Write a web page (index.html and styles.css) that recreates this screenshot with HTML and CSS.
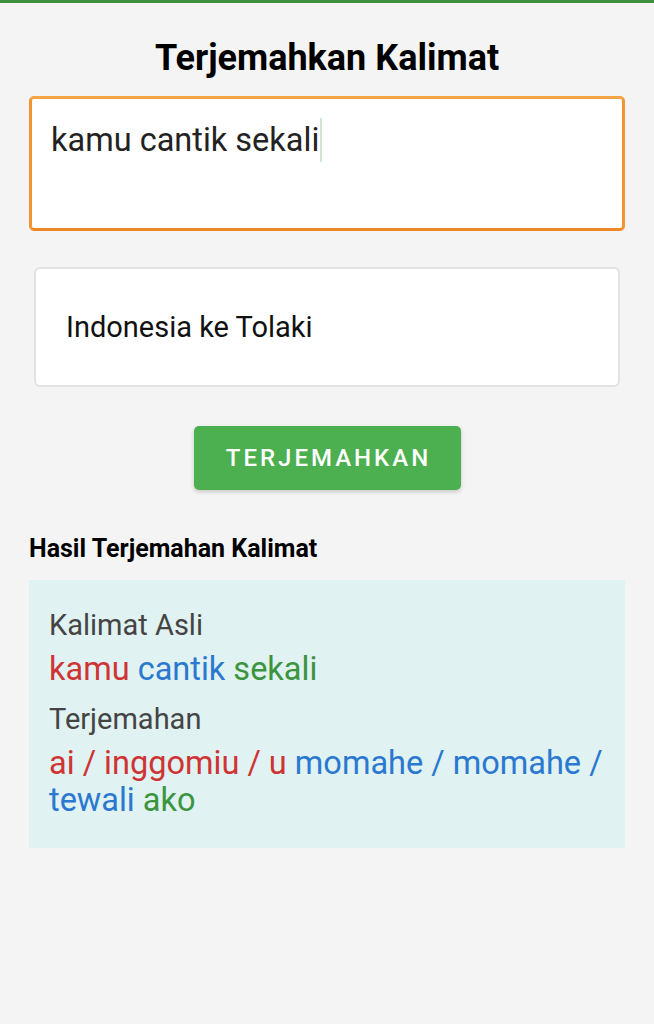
FILE: index.html
```html
<!DOCTYPE html>
<html lang="id">
<head>
<meta charset="utf-8">
<title>Terjemahkan Kalimat</title>
<link rel="stylesheet" href="styles.css">
</head>
<body>
<div class="topbar"></div>
<main class="page">
  <h1 class="title">Terjemahkan Kalimat</h1>
  <div class="input-box">
    <span class="input-text">kamu cantik sekali</span><span class="caret"></span>
  </div>
  <div class="select-box">Indonesia ke Tolaki</div>
  <div class="btn-row"><button class="btn">TERJEMAHKAN</button></div>
  <h2 class="subtitle">Hasil Terjemahan Kalimat</h2>
  <section class="result">
    <div class="label">Kalimat Asli</div>
    <div class="words"><span class="red">kamu</span> <span class="blue">cantik</span> <span class="green">sekali</span></div>
    <div class="label">Terjemahan</div>
    <div class="words"><span class="red">ai / inggomiu / u</span> <span class="blue">momahe / momahe / tewali</span> <span class="green">ako</span></div>
  </section>
</main>
</body>
</html>
```
FILE: styles.css
```css
html, body {
  margin: 0;
  padding: 0;
}
body {
  background: #f4f4f4;
  font-family: Roboto, "Liberation Sans", sans-serif;
  color: #222;
  min-height: 1024px;
}
.topbar {
  height: 3px;
  background: #3f8f3f;
}
.page {
  padding: 0 29px;
}
.title {
  margin: 34px 0 0;
  font-size: 36px;
  font-weight: 700;
  line-height: 42px;
  text-align: center;
  color: #000;
}
.input-box {
  margin-top: 17px;
  box-sizing: border-box;
  height: 135px;
  border: 3px solid #f29530;
  border-top-color: #f5a443;
  border-bottom-color: #ee8726;
  border-radius: 5px;
  background: #fff;
  padding: 19px 19px;
  display: flex;
  align-items: flex-start;
  font-size: 32.5px;
  line-height: 44px;
}
.input-text {
  color: #222;
}
.caret {
  display: inline-block;
  width: 2px;
  height: 44px;
  margin-left: 1px;
  background: #cfe6d3;
}
.select-box {
  margin: 36px 5px 0;
  height: 120px;
  box-sizing: border-box;
  border: 2px solid #e2e2e2;
  border-radius: 6px;
  background: #fff;
  padding: 0 30px;
  display: flex;
  align-items: center;
  font-size: 29px;
  color: #111;
}
.btn-row {
  display: flex;
  justify-content: center;
  margin-top: 39px;
}
.btn {
  width: 267px;
  height: 64px;
  border: none;
  border-radius: 5px;
  background: #4caf50;
  color: #fff;
  font-family: Roboto, "Liberation Sans", sans-serif;
  font-size: 24px;
  font-weight: 500;
  letter-spacing: 3px;
  padding: 0 0 0 3px;
  box-shadow: 0 2px 4px rgba(0,0,0,0.18);
}
.subtitle {
  margin: 44px 0 0;
  font-size: 25px;
  font-weight: 700;
  line-height: 30px;
  color: #000;
}
.result {
  margin-top: 16px;
  background: #e0f2f1;
  padding: 25px 20px 28px;
}
.label {
  font-size: 29px;
  line-height: 40px;
  color: #444;
}
.words {
  font-size: 32.5px;
  line-height: 37.5px;
  margin: 6px 0 10px;
}
.words:last-child {
  margin-bottom: 0;
}
.red { color: #cf3434; }
.blue { color: #2a78cf; }
.green { color: #3c943f; }
```
